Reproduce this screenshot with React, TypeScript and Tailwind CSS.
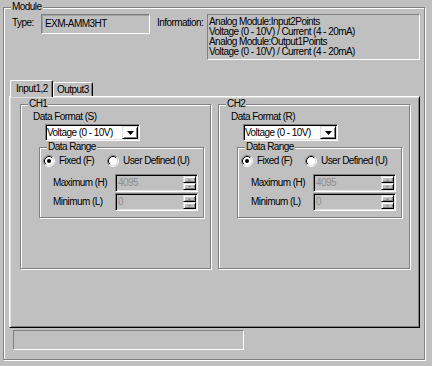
import React from "react";

const etched = "border border-[#808080] shadow-[inset_1px_1px_0_#fff,1px_1px_0_#fff]";
const sunken =
  "border border-t-[#808080] border-l-[#808080] border-r-white border-b-white shadow-[inset_1px_1px_0_#000,inset_-1px_-1px_0_#dfdfdf]";
const raised =
  "border border-t-[#dfdfdf] border-l-[#dfdfdf] border-r-black border-b-black shadow-[inset_1px_1px_0_#fff,inset_-1px_-1px_0_#808080]";
const flatSunken = "border border-t-[#808080] border-l-[#808080] border-r-white border-b-white";

function Group({ label, className = "", children }: { label: string; className?: string; children?: React.ReactNode }) {
  return (
    <div className={`relative ${etched} ${className}`}>
      <span className="absolute -top-[7px] left-[7px] bg-[#c0c0c0] px-[1px]">{label}</span>
      {children}
    </div>
  );
}

function Radio({ checked = false }: { checked?: boolean }) {
  return (
    <svg width="12" height="12" viewBox="0 0 12 12" className="shrink-0">
      <circle cx="6" cy="6" r="4.5" fill="#fff" />
      <path d="M2.11 9.89A5.5 5.5 0 0 1 9.89 2.11" stroke="#808080" fill="none" />
      <path d="M9.89 2.11A5.5 5.5 0 0 1 2.11 9.89" stroke="#fff" fill="none" />
      <path d="M2.82 9.18A4.5 4.5 0 0 1 9.18 2.82" stroke="#000" fill="none" />
      <path d="M9.18 2.82A4.5 4.5 0 0 1 2.82 9.18" stroke="#dfdfdf" fill="none" />
      {checked && <circle cx="6" cy="6" r="2" fill="#000" />}
    </svg>
  );
}

function Combo({ className = "" }: { className?: string }) {
  return (
    <div className={`w-[95px] h-[17px] ${sunken} bg-white p-[1px] flex items-center ${className}`}>
      <span className="flex-1 whitespace-nowrap">Voltage (0 - 10V)</span>
      <div className={`w-[16px] h-[13px] ${raised} flex items-center justify-center`}>
        <svg width="7" height="4" viewBox="0 0 7 4">
          <path d="M0 0h7L3.5 4z" fill="#000" />
        </svg>
      </div>
    </div>
  );
}

function SpinRow({ label, value, className = "" }: { label: string; value: string; className?: string }) {
  return (
    <div className={`flex items-center ${className}`}>
      <span className="w-[72px] pl-[10px] whitespace-nowrap">{label}</span>
      <div className={`w-[83px] h-[18px] ${sunken} p-[1px] flex`}>
        <span className="flex-1 pl-[1px] leading-[14px] text-[#8f8f8f]">{value}</span>
        <div className="flex flex-col w-[13px]">
          <div className={`h-[7px] ${raised} flex items-center justify-center`}>
            <svg width="3" height="2" viewBox="0 0 3 2">
              <path d="M1.5 0L3 2H0z" fill="#8f8f8f" />
            </svg>
          </div>
          <div className={`h-[7px] ${raised} flex items-center justify-center`}>
            <svg width="3" height="2" viewBox="0 0 3 2">
              <path d="M0 0h3L1.5 2z" fill="#8f8f8f" />
            </svg>
          </div>
        </div>
      </div>
    </div>
  );
}

function Channel({ name, fmt, width }: { name: string; fmt: string; width: string }) {
  return (
    <Group label={name} className={`${width} h-[165px] pl-[12px] pt-[6px]`}>
      <div>Data Format ({fmt})</div>
      <Combo className="ml-[12px] mt-[1px]" />
      <Group label="Data Range" className="ml-[6px] mt-[6px] w-[165px] h-[71px] pl-[3px] pt-[7px]">
        <div className="flex items-center h-[12px]">
          <div className="flex items-center gap-[4px] w-[64px]">
            <Radio checked />
            <span>Fixed (F)</span>
          </div>
          <div className="flex items-center gap-[4px]">
            <Radio />
            <span className="whitespace-nowrap">User Defined (U)</span>
          </div>
        </div>
        <SpinRow label="Maximum (H)" value="4095" className="mt-[7px]" />
        <SpinRow label="Minimum (L)" value="0" className="mt-[1px]" />
      </Group>
    </Group>
  );
}

export default function App() {
  return (
    <div className="w-[432px] h-[366px] overflow-hidden bg-[#c0c0c0] pl-[3px] pt-[7px] font-['Liberation_Sans',Arial,sans-serif] text-[10px] tracking-[-0.55px] leading-[12px] text-black">
      <Group label="Module" className="w-[422px] h-[353px] pt-[6px]">
        <div className="flex items-start pl-[8px]">
          <span className="w-[29px] pt-[3px]">Type:</span>
          <div className={`w-[109px] h-[20px] ${flatSunken} shadow-[inset_1px_1px_0_#a0a0a0] pl-[3px] flex items-center`}>
            EXM-AMM3HT
          </div>
          <span className="ml-[7px] w-[50px] pt-[3px] whitespace-nowrap">Information:</span>
          <div className={`w-[213px] h-[46px] ${flatSunken} pl-[1px] pt-[2px] leading-[10px]`}>
            <div>Analog Module:Input2Points</div>
            <div>Voltage (0 - 10V) / Current (4 - 20mA)</div>
            <div>Analog Module:Output1Points</div>
            <div>Voltage (0 - 10V) / Current (4 - 20mA)</div>
          </div>
        </div>

        <div className="mt-[20px] ml-[5px]">
          <div className="relative z-10 flex items-end h-[17px] -mb-[1px] pl-[1px]">
            <div className="h-[17px] w-[43px] bg-[#c0c0c0] border-l border-t border-r border-l-white border-t-white border-r-black shadow-[inset_-1px_0_0_#808080] rounded-t-[2px] pl-[5px] pt-[2px]">
              Input1,2
            </div>
            <div className="mb-[1px] h-[14px] w-[40px] border-l border-t border-r border-l-white border-t-white border-r-black shadow-[inset_-1px_0_0_#808080] rounded-t-[2px] pl-[3px] pt-[1px]">
              Output3
            </div>
          </div>
          <div className="w-[411px] h-[232px] border border-t-white border-l-white border-r-black border-b-black shadow-[inset_1px_1px_0_#dfdfdf,inset_-1px_-1px_0_#808080] flex items-start gap-[7px] pl-[10px] pt-[7px]">
            <Channel name="CH1" fmt="S" width="w-[191px]" />
            <Channel name="CH2" fmt="R" width="w-[192px]" />
          </div>
        </div>

        <div className={`mt-[2px] ml-[9px] w-[231px] h-[20px] ${flatSunken}`} />
      </Group>
    </div>
  );
}
